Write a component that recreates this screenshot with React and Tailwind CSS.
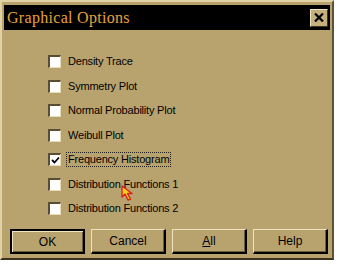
import React from 'react';

const options = [
  { label: 'Density Trace', checked: false },
  { label: 'Symmetry Plot', checked: false },
  { label: 'Normal Probability Plot', checked: false },
  { label: 'Weibull Plot', checked: false },
  { label: 'Frequency Histogram', checked: true, focused: true },
  { label: 'Distribution Functions 1', checked: false },
  { label: 'Distribution Functions 2', checked: false },
];

function Checkbox({ checked }) {
  return (
    <span className="w-[13px] h-[13px] bg-white border-t-2 border-l-2 border-b border-r border-t-[#5a4e32] border-l-[#5a4e32] border-b-[#e8dcb8] border-r-[#e8dcb8] flex items-center justify-center shrink-0">
      {checked && (
        <svg width="9" height="9" viewBox="0 0 9 9">
          <path d="M1 4 L3.5 6.5 L8 1.5" stroke="#000" strokeWidth="1.8" fill="none" />
        </svg>
      )}
    </span>
  );
}

function Button({ label, isDefault, underline }) {
  return (
    <button
      className={`w-[75px] h-[25px] bg-[#b8a36f] text-[12px] text-black flex items-center justify-center ${
        isDefault
          ? 'border-2 border-black shadow-[inset_1px_1px_0_#efe3c0,inset_-1px_-1px_0_#6e5f3c]'
          : 'border-b-2 border-r-2 border-black border-t border-l border-t-[#efe3c0] border-l-[#efe3c0] shadow-[inset_-1px_-1px_0_#6e5f3c]'
      }`}
    >
      {underline ? (
        <span>
          <span className="underline">{label[0]}</span>
          {label.slice(1)}
        </span>
      ) : (
        label
      )}
    </button>
  );
}

export default function App() {
  return (
    <div className="w-[340px] h-[265px] bg-white relative font-['Liberation_Sans',Arial,sans-serif] overflow-hidden">
      {/* dialog frame */}
      <div className="w-[334px] h-[260px] bg-[#b8a36f] border-t-2 border-l-2 border-t-[#e0d2a4] border-l-[#e0d2a4] border-r-2 border-b-2 border-r-[#5e5234] border-b-[#3a321e] pt-[3px] px-[1px] flex flex-col">
        {/* title bar */}
        <div className="h-[25px] mx-[1px] bg-black flex items-center justify-between pl-[3px] pr-[2px]">
          <span className="text-[#e8a23a] text-[16px] leading-none font-['Liberation_Serif','Times_New_Roman',serif] tracking-[0.3px] mt-[1px]">
            Graphical Options
          </span>
          <span className="w-[18px] h-[18px] bg-[#c4b07c] border-t border-l border-t-[#efe3c0] border-l-[#efe3c0] border-b border-r border-b-[#3a321e] border-r-[#3a321e] flex items-center justify-center">
            <svg width="10" height="9" viewBox="0 0 10 9">
              <path d="M1 0.5 L9 8.5 M9 0.5 L1 8.5" stroke="#000" strokeWidth="2.2" />
            </svg>
          </span>
        </div>

        {/* options */}
        <div className="flex flex-col gap-[11.5px] pl-[45px] pt-[25px]">
          {options.map((o) => (
            <label key={o.label} className="flex items-center gap-[6px] h-[13px]">
              <Checkbox checked={o.checked} />
              <span
                className={`text-[11px] leading-[13px] tracking-[-0.2px] text-black px-[1px] ${
                  o.focused ? 'outline outline-1 outline-dotted outline-[#222]' : ''
                }`}
              >
                {o.label}
              </span>
            </label>
          ))}
        </div>

        {/* buttons */}
        <div className="flex gap-[6px] pl-[7px] mt-[14px]">
          <Button label="OK" isDefault />
          <Button label="Cancel" />
          <Button label="All" underline />
          <Button label="Help" />
        </div>
      </div>

      {/* mouse cursor */}
      <svg className="absolute left-[121px] top-[185px]" width="16" height="17" viewBox="0 0 16 17">
        <path
          d="M1 1 L1 12 L4 9 L7 15 L9.5 14 L6.5 8.5 L11 8.5 Z"
          fill="#f5d21a"
          stroke="#d9221a"
          strokeWidth="1.4"
          strokeLinejoin="round"
        />
      </svg>
    </div>
  );
}
